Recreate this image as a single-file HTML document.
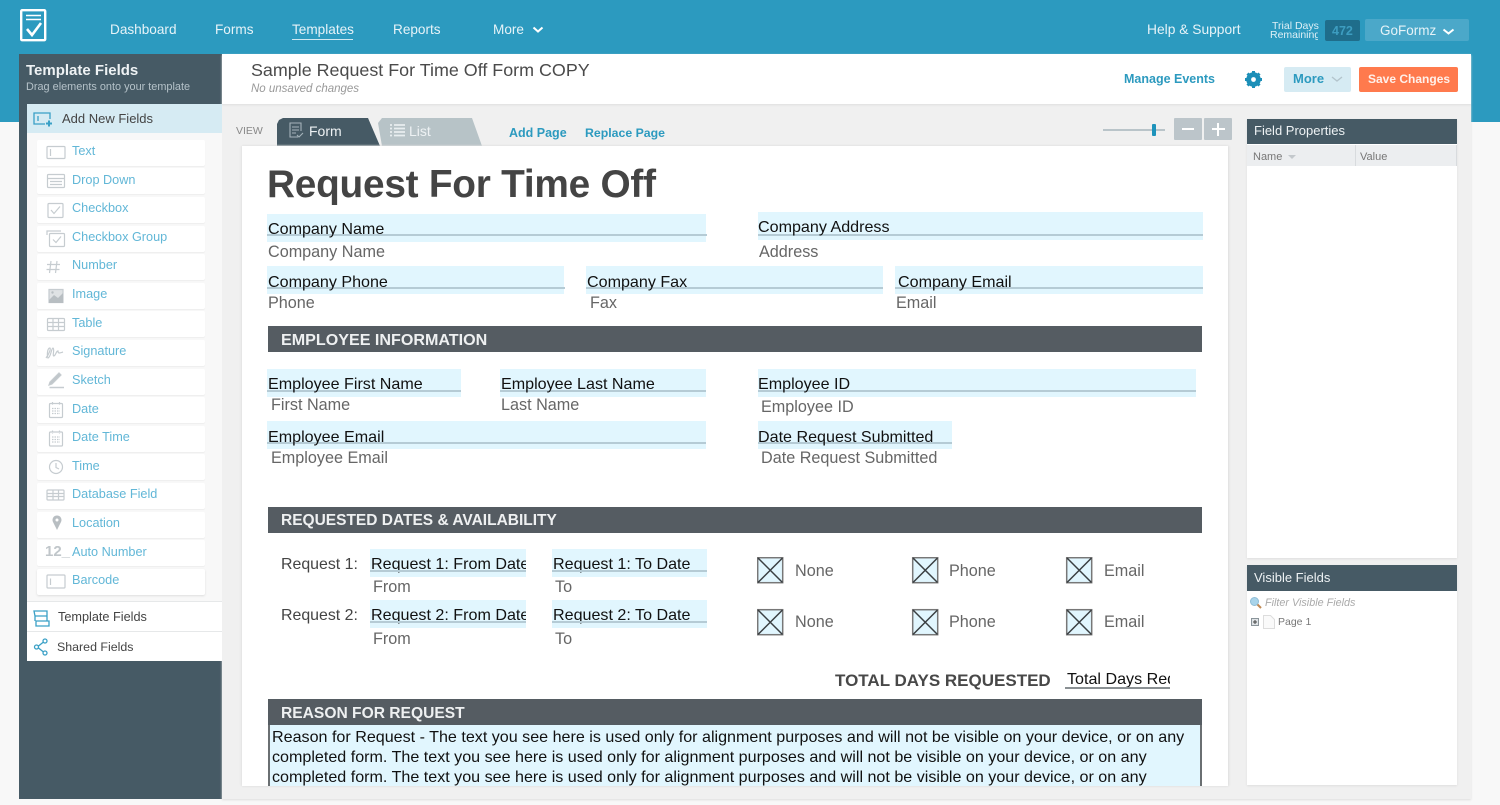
<!DOCTYPE html>
<html><head><meta charset="utf-8"><title>Template</title>
<style>
html,body{margin:0;padding:0}
body{width:1500px;height:805px;overflow:hidden;position:relative;background:#f8f8f8;font-family:"Liberation Sans",sans-serif;color:#444;filter:blur(.35px)}
div,span.t,svg{position:absolute}
.t{white-space:nowrap;line-height:20px;height:20px}
.nav{color:#e6f3f8;font-size:13.6px;top:20px}
.it{left:37px;width:168px;height:26px;background:#fff;border-radius:2px;box-shadow:0 1px 1px #eee}
.il{left:72px;color:#62b7d7;font-size:12.7px}
.fld{background:#e1f6fe}
.ln{background:#b5cbd5;height:2px}
.bk{color:#111;font-size:16.1px}
.gr{color:#666;font-size:16.2px}
.bar{left:268px;width:934px;background:#555c62;height:26px}
.bt{color:#eef0f1;font-size:16px;left:281px;font-weight:bold}
</style></head><body>
<div style="left:0;top:0;width:1500px;height:122px;background:#2c9abf"></div>
<div style="left:19px;top:54px;width:203px;height:745px;background:#465a65"></div>
<div style="left:222px;top:104px;width:1249px;height:695px;background:#f0f0f0;box-shadow:0 1px 2px #ddd"></div>
<div style="left:222px;top:54px;width:1249px;height:50px;background:#fff;box-shadow:0 1px 2px #ddd"></div>

<svg style="left:20px;top:9px" width="27" height="33" viewBox="0 0 27 33" fill="none" stroke="#fff"><rect x="1.2" y="1.2" width="24" height="30" rx="1" stroke-width="2.4"/><path d="M6 6.500H21M6 10.500H21" stroke-width="1.500"/><path d="M7 20l5 6 9-12" stroke-width="2.600"/></svg>
<span class="t nav" style="left:110px">Dashboard</span>
<span class="t nav" style="left:215px">Forms</span>
<span class="t nav" style="left:292px">Templates</span>
<div style="left:292px;top:39px;width:61px;height:1px;background:#cfe8f1"></div>
<span class="t nav" style="left:393px">Reports</span>
<span class="t nav" style="left:493px">More</span>
<svg style="left:532px;top:26px" width="12" height="8" fill="none" stroke="#fff" stroke-width="2"><path d="M1.500 1.500L6 5.500L10.500 1.500"/></svg>
<span class="t nav" style="left:1147px;font-size:13.800px">Help &amp; Support</span>
<span class="t" style="left:1272px;top:16px;font-size:10.500px;color:#dff0f6">Trial Days</span>
<div style="left:1270px;top:25px;width:48px;height:20px;overflow:hidden"><span class="t" style="left:0;top:0;font-size:10.500px;color:#dff0f6">Remaining</span></div>
<div style="left:1325px;top:20px;width:35px;height:21px;background:#1f6d8b;border-radius:2px"></div>
<span class="t" style="left:1332px;top:21px;font-size:12.500px;font-weight:bold;color:#3d9dc0">472</span>
<div style="left:1365px;top:19px;width:104px;height:22px;background:#4ba8c9;border-radius:2px"></div>
<span class="t" style="left:1380px;top:21px;font-size:13.500px;color:#e6f3f8">GoFormz</span>
<svg style="left:1442px;top:28px" width="13" height="8" fill="none" stroke="#fff" stroke-width="2"><path d="M1.500 1.500L6.500 5.500L11.500 1.500"/></svg>

<span class="t" style="left:26px;top:61px;font-size:15px;font-weight:bold;color:#eef2f4">Template Fields</span>
<span class="t" style="left:26px;top:77px;font-size:10.900px;color:#b5c2c9">Drag elements onto your template</span>
<div style="left:27px;top:104px;width:195px;height:29px;background:#d6ebf3"></div>
<div style="left:27px;top:133px;width:195px;height:468px;background:#f8f8f8"></div>
<div style="left:27px;top:601px;width:195px;height:60px;background:#e6e8e9"></div>
<svg style="left:33px;top:112px" width="20" height="15" fill="none" stroke="#3aa0c6" stroke-width="1.300"><path d="M12 12H1V1H17V7"/><path d="M5 4V9" /><path d="M16 8.500V14.500M13 11.500H19" stroke-width="2"/></svg>
<span class="t" style="left:62px;top:108.500px;font-size:13px;color:#444">Add New Fields</span>

<div class="it" style="top:140px"></div><div class="it" style="top:168px"></div><div class="it" style="top:197px"></div><div class="it" style="top:226px"></div><div class="it" style="top:254px"></div><div class="it" style="top:283px"></div><div class="it" style="top:311px"></div><div class="it" style="top:340px"></div><div class="it" style="top:369px"></div><div class="it" style="top:397px"></div><div class="it" style="top:426px"></div><div class="it" style="top:454px"></div><div class="it" style="top:483px"></div><div class="it" style="top:512px"></div><div class="it" style="top:540px"></div><div class="it" style="top:569px;box-shadow:0 1px 2px #ddd"></div>
<span class="t il" style="top:141px">Text</span>
<span class="t il" style="top:170px">Drop Down</span>
<span class="t il" style="top:198px">Checkbox</span>
<span class="t il" style="top:227px">Checkbox Group</span>
<span class="t il" style="top:255px">Number</span>
<span class="t il" style="top:284px">Image</span>
<span class="t il" style="top:313px">Table</span>
<span class="t il" style="top:341px">Signature</span>
<span class="t il" style="top:370px">Sketch</span>
<span class="t il" style="top:399px">Date</span>
<span class="t il" style="top:427px">Date Time</span>
<span class="t il" style="top:456px">Time</span>
<span class="t il" style="top:484px">Database Field</span>
<span class="t il" style="top:513px">Location</span>
<span class="t il" style="top:542px">Auto Number</span>
<span class="t il" style="top:570px">Barcode</span>

<svg style="left:40px;top:140px" width="32" height="455" fill="none" stroke="#c6ccd0" stroke-width="1.200">
<rect x="7" y="6.500" width="18" height="12" rx="1"/><path d="M10.500 9v7" />
<rect x="7.500" y="34.500" width="17" height="13" rx="1"/><path d="M8 38.500H24M10 41.500H22M10 44.500H22"/>
<rect x="8" y="63.500" width="15" height="14" rx="1"/><path d="M11 70l3 3.500 6-7"/>
<path d="M7 95V91H21"/><rect x="9.500" y="93.500" width="15" height="13" rx="1"/><path d="M13 99.500l3 3 5-6"/>
<path d="M11 121l-1.500 12M17 121l-1.500 12M7 124.500H20M6.500 129.500H19.500"/>
<path d="M9 149.500h14v13H9z" fill="#dfe2e4"/><path d="M9 160l5-5 4 3 5-5v10H9z" fill="#b8bec2" stroke="none"/><circle cx="12.500" cy="152.500" r="1.200" fill="#b8bec2" stroke="none"/>
<rect x="7.500" y="178.500" width="17" height="12" rx="1"/><path d="M7.500 182.500H24M7.500 186.500H24M13 178.500v12M18.500 178.500v12"/>
<path d="M6 218c3-4 5-9 4-10-3 0-3 8-2 10 3-1 3-9 5-10 2 1-1 8 1 8 2-1 2-5 4-5 0 3 2 2 5 1"/>
<path d="M10 242l9-9 2 2-9 9-3 1z" fill="#c0c6ca"/><path d="M9.500 247.500H24" stroke-width="1.500"/>
<rect x="9.500" y="263.500" width="13" height="14" rx="1"/><path d="M12.500 262v3M19.500 262v3M12 268.500h8M12 271h8M12 273.500h8" stroke-dasharray="1.500 1"/>
<rect x="9.500" y="292" width="13" height="14" rx="1"/><path d="M12.500 290.500v3M19.500 290.500v3M12 297h8M12 299.500h8M12 302h8" stroke-dasharray="1.500 1"/>
<circle cx="16" cy="327" r="6.500"/><path d="M16 323v4.500l3 1.500"/>
<rect x="7" y="350" width="17" height="10" rx="1"/><path d="M7 353.500H24M7 356.500H24M13 350v10M18.500 350v10"/>
<path d="M17 390l-4-8a4.500 4.500 0 1 1 8 0z" fill="#b8bec2" stroke="none"/><circle cx="17" cy="380" r="1.500" fill="#fff" stroke="none"/>
<rect x="7" y="435" width="18" height="13" rx="1"/><path d="M10.500 438.500v6.500"/>
</svg>
<span class="t" style="left:45px;top:542px;font-size:15px;font-weight:bold;color:#c0c6ca">12_</span>

<div style="left:27px;top:602px;width:195px;height:29px;background:#fff"></div>
<div style="left:27px;top:632px;width:195px;height:29px;background:#fff"></div>
<svg style="left:32px;top:609px" width="20" height="50" fill="none" stroke="#3aa0c6" stroke-width="1.300"><path d="M2 2h13v5H3zM15 7v5h2v5H4v-5h12M3 7v5"/><circle cx="4.500" cy="38" r="2"/><circle cx="13" cy="32" r="2"/><circle cx="13" cy="44" r="2"/><path d="M6.500 37l5-4M6.500 39l5 4"/></svg>
<span class="t" style="left:58px;top:607px;font-size:12.700px;color:#444">Template Fields</span>
<span class="t" style="left:57px;top:637px;font-size:12.400px;color:#444">Shared Fields</span>

<span class="t" style="left:251px;top:60px;font-size:17.900px;color:#4a4a4a">Sample Request For Time Off Form COPY</span>
<span class="t" style="left:251px;top:79px;font-size:11.500px;font-style:italic;color:#999">No unsaved changes</span>
<span class="t" style="left:1124px;top:69px;font-size:12.500px;font-weight:bold;color:#2c9abf">Manage Events</span>
<svg style="left:1244px;top:70px" width="19" height="19" viewBox="0 0 19 19"><circle cx="9.500" cy="9.500" r="5.300" fill="none" stroke="#1c8fb8" stroke-width="4"/><path d="M9.500 1v17M1 9.500h17M3.500 3.500l12 12M15.500 3.500l-12 12" stroke="#1c8fb8" stroke-width="3" /><circle cx="9.500" cy="9.500" r="2.400" fill="#fff"/></svg>
<div style="left:1284px;top:67px;width:67px;height:25px;background:#d6ebf3;border-radius:2px"></div>
<span class="t" style="left:1293px;top:69px;font-size:13px;font-weight:bold;color:#2c9abf">More</span>
<svg style="left:1331px;top:76px" width="12" height="7" fill="none" stroke="#b3c4cc" stroke-width="1.400"><path d="M1 1l5 4 5-4"/></svg>
<div style="left:1359px;top:67px;width:99px;height:25px;background:#ff7a4d;border-radius:2px"></div>
<span class="t" style="left:1368px;top:69px;font-size:12px;font-weight:bold;color:#fff0ea">Save Changes</span>

<span class="t" style="left:236px;top:121px;font-size:10.500px;color:#888">VIEW</span>
<div style="left:378px;top:118px;width:104px;height:28px;background:#b7c3c7;clip-path:polygon(4px 0,94px 0,104px 28px,4px 28px,0 5px)"></div>
<div style="left:277px;top:118px;width:104px;height:28px;background:#465a65;clip-path:polygon(0 6px,2px 2px,6px 0,91px 0,103px 28px,0 28px)"></div>
<svg style="left:288px;top:122px" width="16" height="18" fill="none" stroke="#a5b3ba" stroke-width="1.100"><path d="M10 15H2V1h11v8M4 5h7M4 8h7M4 11h4"/><path d="M9 13l2 2 4-4"/></svg>
<span class="t" style="left:309px;top:121px;font-size:14px;color:#eef2f4">Form</span>
<svg style="left:390px;top:123px" width="15" height="15" fill="none" stroke="#e8eef0" stroke-width="1.700"><path d="M4 2h11M4 5.500h11M4 9h11M4 12.500h11M0 2h2M0 5.500h2M0 9h2M0 12.500h2"/></svg>
<span class="t" style="left:409px;top:121px;font-size:14px;color:#eef2f4">List</span>
<span class="t" style="left:509px;top:123px;font-size:12.500px;font-weight:bold;color:#2c9abf">Add Page</span>
<span class="t" style="left:585px;top:123px;font-size:12.300px;font-weight:bold;color:#2c9abf">Replace Page</span>
<div style="left:1103px;top:129px;width:62px;height:2px;background:#b9c4c9"></div>
<div style="left:1152px;top:124px;width:4px;height:12px;background:#1e93bb;border-radius:1px"></div>
<div style="left:1174px;top:118px;width:28px;height:22px;background:#bcc5ca;border-radius:1px"></div>
<div style="left:1204px;top:118px;width:28px;height:22px;background:#bcc5ca;border-radius:1px"></div>
<div style="left:1182px;top:128px;width:12px;height:2px;background:#fff"></div>
<div style="left:1212px;top:128px;width:13px;height:2px;background:#fff"></div>
<div style="left:1217px;top:123px;width:2px;height:13px;background:#fff"></div>

<div style="left:242px;top:146px;width:986px;height:640px;background:#fff;box-shadow:1px 0 2px #ddd,-1px 0 2px #e4e4e4"></div>
<span class="t" style="left:267px;top:161px;font-size:38.800px;letter-spacing:-.25px;line-height:48px;height:48px;font-weight:bold;color:#444">Request For Time Off</span>

<div class="fld" style="left:267px;top:214px;width:439px;height:28px"></div><div class="ln" style="left:267px;top:234px;width:440px"></div>
<span class="t bk" style="left:268px;top:218.500px">Company Name</span>
<span class="t gr" style="left:268px;top:242px">Company Name</span>
<div class="fld" style="left:758px;top:212px;width:445px;height:28px"></div><div class="ln" style="left:758px;top:234px;width:445px"></div>
<span class="t bk" style="left:758px;top:216.500px">Company Address</span>
<span class="t gr" style="left:759px;top:242px">Address</span>

<div class="fld" style="left:267px;top:266px;width:297px;height:28px"></div><div class="ln" style="left:267px;top:287px;width:298px"></div>
<span class="t bk" style="left:268px;top:271.500px">Company Phone</span>
<span class="t gr" style="left:268px;top:293px">Phone</span>
<div class="fld" style="left:586px;top:266px;width:297px;height:28px"></div><div class="ln" style="left:586px;top:287px;width:297px"></div>
<span class="t bk" style="left:587px;top:271.500px">Company Fax</span>
<span class="t gr" style="left:590px;top:293px">Fax</span>
<div class="fld" style="left:895px;top:266px;width:308px;height:28px"></div><div class="ln" style="left:895px;top:287px;width:308px"></div>
<span class="t bk" style="left:898px;top:271.500px">Company Email</span>
<span class="t gr" style="left:896px;top:293px">Email</span>

<div class="bar" style="top:326px"></div>
<span class="t bt" style="top:330px;font-size:16.100px">EMPLOYEE INFORMATION</span>

<div class="fld" style="left:267px;top:369px;width:194px;height:28px"></div><div class="ln" style="left:267px;top:390px;width:194px"></div>
<span class="t bk" style="left:268px;top:373.500px">Employee First Name</span>
<span class="t gr" style="left:271px;top:395px">First Name</span>
<div class="fld" style="left:500px;top:369px;width:206px;height:28px"></div><div class="ln" style="left:500px;top:390px;width:206px"></div>
<span class="t bk" style="left:501px;top:373.500px">Employee Last Name</span>
<span class="t gr" style="left:501px;top:395px">Last Name</span>
<div class="fld" style="left:758px;top:369px;width:438px;height:28px"></div><div class="ln" style="left:758px;top:390px;width:438px"></div>
<span class="t bk" style="left:758px;top:373.500px">Employee ID</span>
<span class="t gr" style="left:761px;top:397px">Employee ID</span>
<div class="fld" style="left:267px;top:421px;width:439px;height:28px"></div><div class="ln" style="left:267px;top:442px;width:439px"></div>
<span class="t bk" style="left:268px;top:426.500px">Employee Email</span>
<span class="t gr" style="left:271px;top:448px">Employee Email</span>
<div class="fld" style="left:758px;top:421px;width:194px;height:28px"></div><div class="ln" style="left:758px;top:442px;width:194px"></div>
<span class="t bk" style="left:758px;top:426.500px">Date Request Submitted</span>
<span class="t gr" style="left:761px;top:448px">Date Request Submitted</span>

<div class="bar" style="top:507px"></div>
<span class="t bt" style="top:511px;font-size:15.500px">REQUESTED DATES &amp; AVAILABILITY</span>

<span class="t gr" style="left:281px;top:555px;color:#444;font-size:15.900px">Request 1:</span>
<span class="t gr" style="left:281px;top:606px;color:#444;font-size:15.900px">Request 2:</span>
<div class="fld" style="left:370px;top:549px;width:156px;height:28px;overflow:hidden"><span class="t bk" style="left:1px;top:5px">Request 1: From Date</span></div><div class="ln" style="left:370px;top:570px;width:156px"></div>
<div class="fld" style="left:552px;top:549px;width:155px;height:28px;overflow:hidden"><span class="t bk" style="left:1px;top:5px">Request 1: To Date</span></div><div class="ln" style="left:552px;top:570px;width:155px"></div>
<span class="t gr" style="left:373px;top:577px">From</span>
<span class="t gr" style="left:555px;top:577px">To</span>
<div class="fld" style="left:370px;top:600px;width:156px;height:28px;overflow:hidden"><span class="t bk" style="left:1px;top:5px">Request 2: From Date</span></div><div class="ln" style="left:370px;top:621px;width:156px"></div>
<div class="fld" style="left:552px;top:600px;width:155px;height:28px;overflow:hidden"><span class="t bk" style="left:1px;top:5px">Request 2: To Date</span></div><div class="ln" style="left:552px;top:621px;width:155px"></div>
<span class="t gr" style="left:373px;top:629px">From</span>
<span class="t gr" style="left:555px;top:629px">To</span>

<svg style="left:757px;top:557px" width="336" height="80" fill="#e1f6fe" stroke="#3a3f42" stroke-width="1.500">
<rect x=".7" y=".7" width="25" height="25" stroke="#777"/><path d="M1 1l24.500 24.500M25.500 1L1 25.500"/>
<rect x="155.700" y=".7" width="25" height="25" stroke="#777"/><path d="M156 1l24.500 24.500M180.500 1L156 25.500"/>
<rect x="309.700" y=".7" width="25" height="25" stroke="#777"/><path d="M310 1l24.500 24.500M334.500 1L310 25.500"/>
<rect x=".7" y="52.700" width="25" height="25" stroke="#777"/><path d="M1 53l24.500 24.500M25.500 53L1 77.500"/>
<rect x="155.700" y="52.700" width="25" height="25" stroke="#777"/><path d="M156 53l24.500 24.500M180.500 53L156 77.500"/>
<rect x="309.700" y="52.700" width="25" height="25" stroke="#777"/><path d="M310 53l24.500 24.500M334.500 53L310 77.500"/>
</svg>
<span class="t gr" style="left:795px;top:561px">None</span>
<span class="t gr" style="left:949px;top:561px">Phone</span>
<span class="t gr" style="left:1104px;top:561px">Email</span>
<span class="t gr" style="left:795px;top:612px">None</span>
<span class="t gr" style="left:949px;top:612px">Phone</span>
<span class="t gr" style="left:1104px;top:612px">Email</span>

<span class="t" style="left:835px;top:671px;font-size:17px;font-weight:bold;color:#484848">TOTAL DAYS REQUESTED</span>
<div style="left:1065px;top:669px;width:105px;height:20px;overflow:hidden"><span class="t bk" style="left:2px;top:0">Total Days Req</span></div>
<div style="left:1065px;top:687px;width:105px;height:2px;background:#8a9093"></div>

<div class="bar" style="top:699px"></div>
<span class="t bt" style="top:704px;font-size:15.600px">REASON FOR REQUEST</span>
<div style="left:268px;top:725px;width:930px;height:61px;background:#e1f6fe;border-left:2px solid #6a6f72;border-right:2px solid #6a6f72"></div>
<div style="left:272px;top:727px;width:925px;height:59px;overflow:hidden;font-size:16.100px;line-height:20px;color:#111;white-space:nowrap">Reason for Request - The text you see here is used only for alignment purposes and will not be visible on your device, or on any<br>completed form. The text you see here is used only for alignment purposes and will not be visible on your device, or on any<br>completed form. The text you see here is used only for alignment purposes and will not be visible on your device, or on any</div>

<div style="left:1247px;top:119px;width:210px;height:439px;background:#fff;box-shadow:0 1px 2px #ddd"></div>
<div style="left:1247px;top:119px;width:210px;height:25px;background:#465a65"></div>
<span class="t" style="left:1254px;top:121px;font-size:13px;color:#eef2f4">Field Properties</span>
<div style="left:1247px;top:145px;width:210px;height:21px;background:#eceef0"></div>
<div style="left:1355px;top:145px;width:1px;height:21px;background:#d8dbde"></div>
<div style="left:1456px;top:145px;width:1px;height:21px;background:#d8dbde"></div>
<span class="t" style="left:1253px;top:147px;font-size:11px;color:#777">Name</span>
<span class="t" style="left:1360px;top:147px;font-size:11px;color:#777">Value</span>
<svg style="left:1288px;top:155px" width="8" height="5"><path d="M0 0h8L4 4z" fill="#c3c8cc"/></svg>

<div style="left:1247px;top:565px;width:210px;height:220px;background:#fff;box-shadow:0 1px 2px #ddd"></div>
<div style="left:1247px;top:565px;width:210px;height:26px;background:#465a65"></div>
<span class="t" style="left:1254px;top:568px;font-size:13px;color:#eef2f4">Visible Fields</span>
<svg style="left:1249px;top:596px" width="14" height="13"><circle cx="5.500" cy="5.500" r="4" fill="#a9d4ea" stroke="#8fbdd6"/><path d="M8.500 8.500l3.500 3.500" stroke="#c08a55" stroke-width="2"/></svg>
<span class="t" style="left:1265px;top:593px;font-size:10.800px;font-style:italic;color:#aaa">Filter Visible Fields</span>
<svg style="left:1250px;top:615px" width="26" height="14" fill="none"><rect x="1.500" y="3.500" width="7" height="7" fill="#dfe3e6" stroke="#8a949a"/><path d="M3 7h4M5 5v4" stroke="#444"/><path d="M13.500 .5h7l4 4v9h-11z" fill="#fafafa" stroke="#ddd"/></svg>
<span class="t" style="left:1278px;top:612px;font-size:10.500px;color:#777">Page 1</span>
</body></html>
